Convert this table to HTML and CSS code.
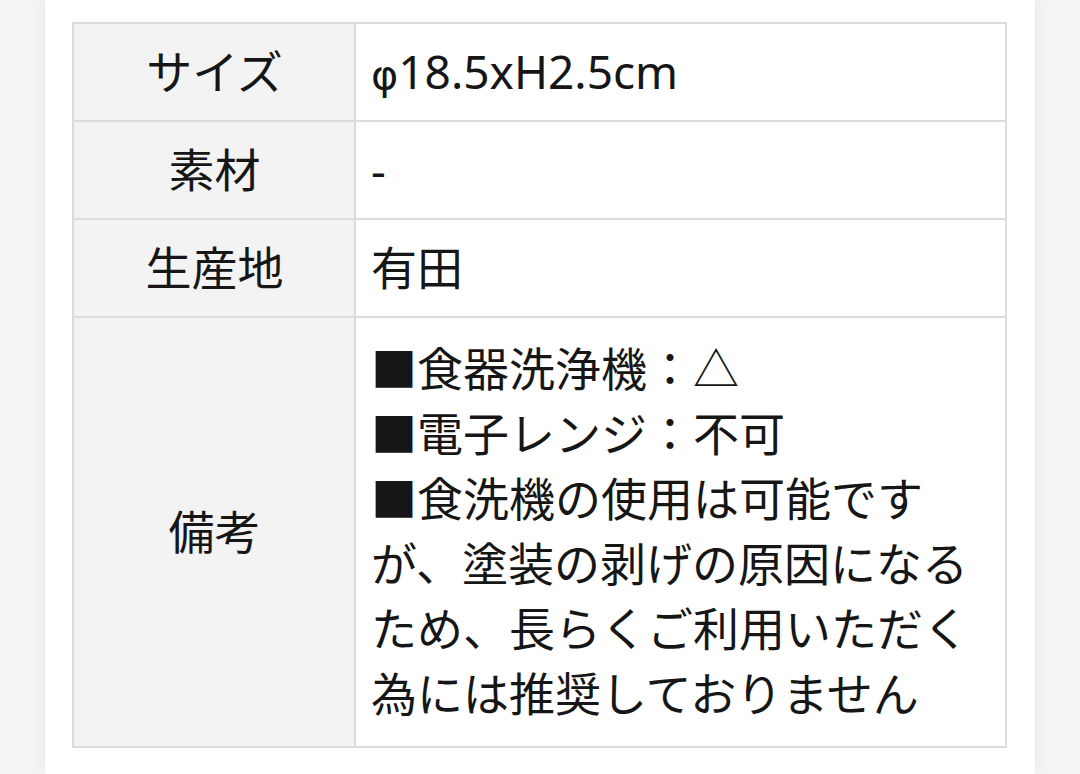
FILE: index.html
```html
<!DOCTYPE html>
<html lang="ja">
<head>
<meta charset="utf-8">
<link rel="stylesheet" href="styles.css">
</head>
<body>
<div class="page">
  <div class="card">
    <table class="spec">
      <tr>
        <th>サイズ</th>
        <td><span class="phi">φ</span>18.5xH2.5cm</td>
      </tr>
      <tr>
        <th>素材</th>
        <td>-</td>
      </tr>
      <tr>
        <th>生産地</th>
        <td>有田</td>
      </tr>
      <tr>
        <th>備考</th>
        <td class="notes">■食器洗浄機：△<br>■電子レンジ：不可<br>■食洗機の使用は可能ですが、塗装の剥げの原因になるため、長らくご利用いただく為には推奨しておりません</td>
      </tr>
    </table>
  </div>
</div>
</body>
</html>
```

FILE: styles.css
```css
html, body {
  margin: 0;
  padding: 0;
}
body {
  background: #f4f4f4;
  font-family: "Noto Sans", "Noto Sans CJK JP", sans-serif;
  color: #161616;
}
.page {
  width: 1080px;
  height: 774px;
  overflow: hidden;
  display: flex;
  justify-content: center;
}
.card {
  width: 990px;
  background: #ffffff;
  box-shadow: 0 0 12px rgba(0,0,0,0.06);
  padding: 22px 27px 0 27px;
  box-sizing: border-box;
}
.spec {
  width: 935px;
  border-collapse: collapse;
  font-size: 46px;
  line-height: 65px;
}
.spec th, .spec td {
  border: 2px solid #dcdcdc;
  padding: 15px 14px 16px 15px;
}
.spec th {
  width: 251px;
  background: #f3f3f3;
  font-weight: normal;
  text-align: center;
}
.spec td {
  text-align: left;
  background: #fff;
}
.phi {
  font-family: "DejaVu Sans", sans-serif;
  font-size: 0.9em;
  line-height: 0;
}
.spec td.notes {
  padding-top: 18px;
  padding-bottom: 20px;
}
```
